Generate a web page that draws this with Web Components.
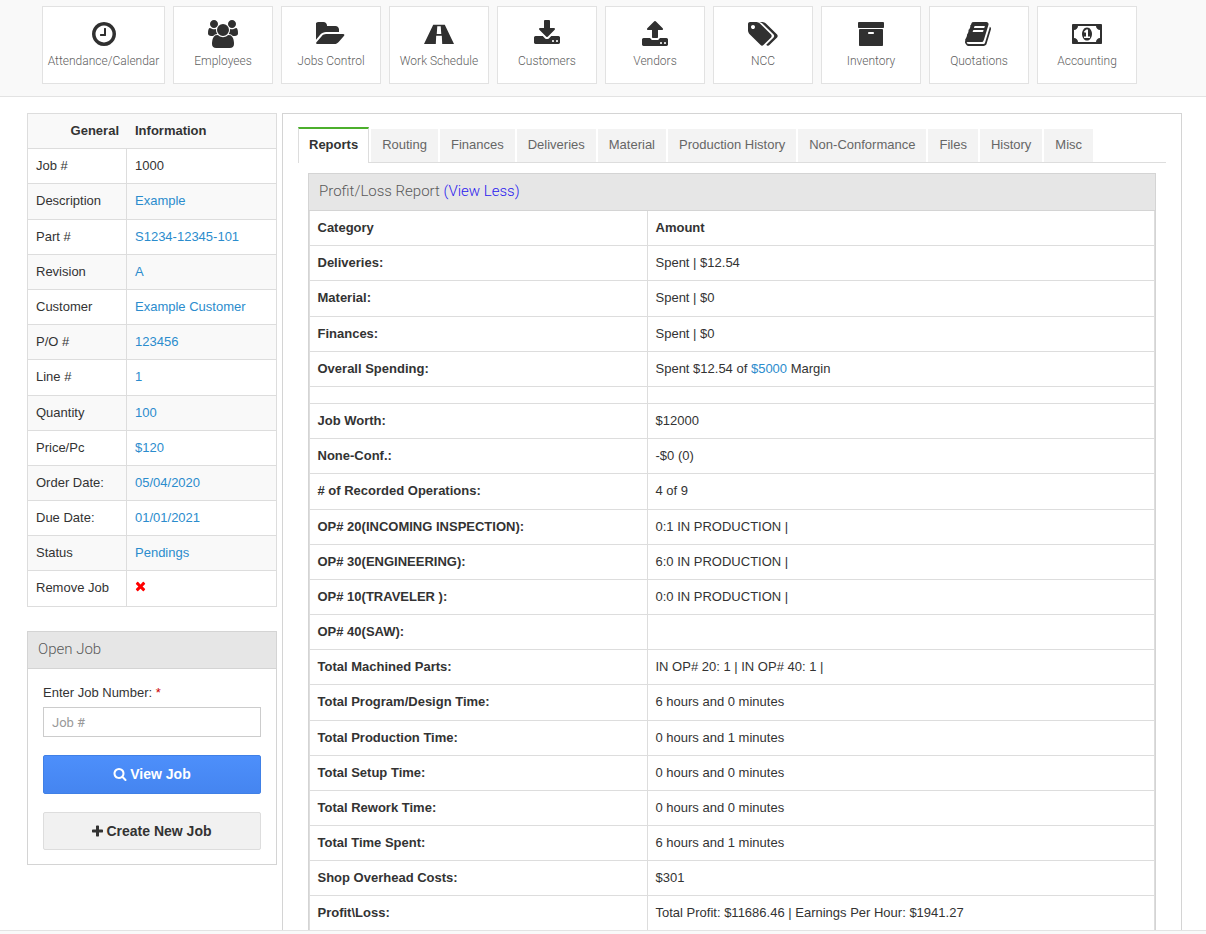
<!DOCTYPE html>
<html lang="en">
<head>
<meta charset="utf-8">
<title>Job</title>
<style>
  html, body { margin: 0; height: 100%; overflow: hidden; background: #fff; }
  body { font: 13px "Liberation Sans", Arial, sans-serif; color: #333; }
  .main { display: flex; align-items: flex-start; gap: 5px; padding: 16px 0 0 27px; }
  .left { display: flex; flex-direction: column; gap: 24.7px; width: 250px; flex: none; }
</style>
</head>
<body>
<top-bar>
  <nav-tile icon="clock" style="width: 123px">Attendance/Calendar</nav-tile>
  <nav-tile icon="users">Employees</nav-tile>
  <nav-tile icon="folder">Jobs Control</nav-tile>
  <nav-tile icon="road">Work Schedule</nav-tile>
  <nav-tile icon="download">Customers</nav-tile>
  <nav-tile icon="upload">Vendors</nav-tile>
  <nav-tile icon="tags">NCC</nav-tile>
  <nav-tile icon="archive">Inventory</nav-tile>
  <nav-tile icon="book">Quotations</nav-tile>
  <nav-tile icon="money">Accounting</nav-tile>
</top-bar>

<div class="main">
  <div class="left">
    <info-table>
      <info-row label="Job #" plain>1000</info-row>
      <info-row label="Description">Example</info-row>
      <info-row label="Part #">S1234-12345-101</info-row>
      <info-row label="Revision">A</info-row>
      <info-row label="Customer">Example Customer</info-row>
      <info-row label="P/O #">123456</info-row>
      <info-row label="Line #">1</info-row>
      <info-row label="Quantity">100</info-row>
      <info-row label="Price/Pc">$120</info-row>
      <info-row label="Order Date:">05/04/2020</info-row>
      <info-row label="Due Date:">01/01/2021</info-row>
      <info-row label="Status">Pendings</info-row>
      <info-row label="Remove Job" plain><fa-icon name="times" size="14" color="#f00" style="vertical-align: top"></fa-icon></info-row>
    </info-table>
    <open-job></open-job>
  </div>

  <report-view>
    <tab-item active>Reports</tab-item>
    <tab-item>Routing</tab-item>
    <tab-item>Finances</tab-item>
    <tab-item>Deliveries</tab-item>
    <tab-item>Material</tab-item>
    <tab-item>Production History</tab-item>
    <tab-item>Non-Conformance</tab-item>
    <tab-item>Files</tab-item>
    <tab-item>History</tab-item>
    <tab-item>Misc</tab-item>

    <report-row slot="rows" label="Category" head>Amount</report-row>
    <report-row slot="rows" label="Deliveries:">Spent | $12.54</report-row>
    <report-row slot="rows" label="Material:">Spent | $0</report-row>
    <report-row slot="rows" label="Finances:">Spent | $0</report-row>
    <report-row slot="rows" label="Overall Spending:">Spent $12.54 of <a-link>$5000</a-link> Margin</report-row>
    <report-row slot="rows" spacer></report-row>
    <report-row slot="rows" label="Job Worth:">$12000</report-row>
    <report-row slot="rows" label="None-Conf.:">-$0 (0)</report-row>
    <report-row slot="rows" label="# of Recorded Operations:">4 of 9</report-row>
    <report-row slot="rows" label="OP# 20(INCOMING INSPECTION):">0:1 IN PRODUCTION |</report-row>
    <report-row slot="rows" label="OP# 30(ENGINEERING):">6:0 IN PRODUCTION |</report-row>
    <report-row slot="rows" label="OP# 10(TRAVELER ):">0:0 IN PRODUCTION |</report-row>
    <report-row slot="rows" label="OP# 40(SAW):"></report-row>
    <report-row slot="rows" label="Total Machined Parts:">IN OP# 20: 1 | IN OP# 40: 1 |</report-row>
    <report-row slot="rows" label="Total Program/Design Time:">6 hours and 0 minutes</report-row>
    <report-row slot="rows" label="Total Production Time:">0 hours and 1 minutes</report-row>
    <report-row slot="rows" label="Total Setup Time:">0 hours and 0 minutes</report-row>
    <report-row slot="rows" label="Total Rework Time:">0 hours and 0 minutes</report-row>
    <report-row slot="rows" label="Total Time Spent:">6 hours and 1 minutes</report-row>
    <report-row slot="rows" label="Shop Overhead Costs:">$301</report-row>
    <report-row slot="rows" label="Profit\Loss:">Total Profit: $11686.46 | Earnings Per Hour: $1941.27</report-row>
  </report-view>
</div>

<page-footer></page-footer>

<script>
// Font Awesome 4 shapes, 64 units = 1px at 1em = 28px
const ICONS = {
  clock: [1792, "M1024 544v448q0 14-9 23t-23 9h-320q-14 0-23-9t-9-23v-64q0-14 9-23t23-9h224v-352q0-14 9-23t23-9h64q14 0 23 9t9 23zm416 352q0-148-73-273t-198-198-273-73-273 73-198 198-73 273 73 273 198 198 273 73 273-73 198-198 73-273zm224 0q0 209-103 385.500t-279.500 279.500-385.500 103-385.500-103-279.500-279.500-103-385.500 103-385.500 279.500-279.500 385.500-103 385.500 103 279.500 279.500 103 385.500z"],
  users: [1920, "M593 896q-162 5-265 128h-134q-82 0-138-40.500t-56-118.500q0-353 124-353 6 0 43.500 21t97.500 42.500 119 21.500q67 0 133-23-5 37-5 66 0 139 81 256zm1071 637q0 120-73 189.500t-194 69.500h-874q-121 0-194-69.500t-73-189.500q0-53 3.500-103.500t14-109 26.500-108.500 43-97.500 62-81 85.500-53.500 111.500-20q10 0 43 21.500t73 48 107 48 135 21.500 135-21.500 107-48 73-48 43-21.500q61 0 111.500 20t85.500 53.500 62 81 43 97.500 26.500 108.500 14 109 3.500 103.500zm-1024-1277q0 106-75 181t-181 75-181-75-75-181 75-181 181-75 181 75 75 181zm704 384q0 159-112.500 271.500t-271.500 112.500-271.500-112.500-112.500-271.500 112.500-271.500 271.500-112.500 271.500 112.500 112.500 271.500zm576 225q0 78-56 118.500t-138 40.500h-134q-103-123-265-128 81-117 81-256 0-29-5-66 66 23 133 23 59 0 119-21.500t97.500-42.500 43.500-21q124 0 124 353zm-128-609q0 106-75 181t-181 75-181-75-75-181 75-181 181-75 181 75 75 181z"],
  folder: [1920, "M1815 952q0 31-31 66l-336 396q-43 51-120.500 86.500t-143.500 35.500h-1088q-34 0-60.500-13t-26.500-43q0-31 31-66l336-396q43-51 120.500-86.500t143.500-35.500h1088q34 0 60.500 13t26.500 43zm-343-344v160h-832q-94 0-197 47.500t-164 119.500l-337 396-5 6q0-4-.5-12.500t-.5-12.500v-960q0-92 66-158t158-66h320q92 0 158 66t66 158v32h544q92 0 158 66t66 158z"],
  road: [1920, "M590 300H1330L1920 1536H1165L1140 1010H780L755 1536H0ZM850 400L815 890H1105L1070 400Z"],
  download: [1792, "M1344 1344q0-26-19-45t-45-19-45 19-19 45 19 45 45 19 45-19 19-45zm256 0q0-26-19-45t-45-19-45 19-19 45 19 45 45 19 45-19 19-45zm128-224v320q0 40-28 68t-68 28h-1472q-40 0-68-28t-28-68v-320q0-40 28-68t68-28h465l135 136q58 56 136 56t136-56l136-136h464q40 0 68 28t28 68zm-325-569q17 41-14 70l-448 448q-18 19-45 19t-45-19l-448-448q-31-29-14-70 17-39 59-39h256v-448q0-26 19-45t45-19h256q26 0 45 19t19 45v448h256q42 0 59 39z"],
  upload: [1792, "M1344 1472q0-26-19-45t-45-19-45 19-19 45 19 45 45 19 45-19 19-45zm256 0q0-26-19-45t-45-19-45 19-19 45 19 45 45 19 45-19 19-45zm128-224v320q0 40-28 68t-68 28h-1472q-40 0-68-28t-28-68v-320q0-40 28-68t68-28h427q21 56 70.500 92t110.500 36h256q61 0 110.500-36t70.500-92h427q40 0 68 28t28 68zm-325-648q-17 40-59 40h-256v448q0 26-19 45t-45 19h-256q-26 0-45-19t-19-45v-448h-256q-42 0-59-40-17-39 14-69l448-448q18-19 45-19t45 19l448 448q31 30 14 69z"],
  tags: [1920, "M448 448q0-53-37.500-90.500t-90.500-37.500-90.500 37.500-37.500 90.500 37.500 90.500 90.500 37.500 90.500-37.500 37.500-90.500zm1067 576q0 53-37 90l-491 492q-39 37-91 37-53 0-90-37l-715-716q-38-37-64.500-101t-26.500-117v-416q0-52 38-90t90-38h416q53 0 117 26.500t102 64.500l715 714q37 39 37 91zm384 0q0 53-37 90l-491 492q-39 37-91 37-36 0-59-14t-53-45l470-470q37-37 37-90 0-52-37-91l-715-714q-38-38-102-64.500t-117-26.500h224q53 0 117 26.500t102 64.500l715 714q37 39 37 91z"],
  archive: [1792, "M1088 832q0-26-19-45t-45-19h-256q-26 0-45 19t-19 45 19 45 45 19h256q26 0 45-19t19-45zm576-192v960q0 26-19 45t-45 19h-1408q-26 0-45-19t-19-45v-960q0-26 19-45t45-19h1408q26 0 45 19t19 45zm64-448v256q0 26-19 45t-45 19h-1536q-26 0-45-19t-19-45v-256q0-26 19-45t45-19h1536q26 0 45 19t19 45z"],
  book: [1792, "M1639 478q40 57 18 129l-275 906q-19 64-76.500 107.500t-122.500 43.500h-923q-77 0-148.500-53.500t-99.500-131.500q-24-67-2-127 0-4 3-27t4-37q1-8-3-21.500t-3-19.500q2-11 8-21t16.500-23.500 16.500-23.500q23-38 45-91.500t30-91.500q3-10 .5-30t-.5-28q3-11 17-28t17-23q21-36 42-92t25-90q1-9-2.500-32t.5-28q4-13 22-30.500t22-22.500q19-26 42.500-84.500t27.500-96.500q1-8-3-25.500t-2-26.500q2-8 9-18t18-23 17-21q8-12 16.500-30.500t15-35 16-36 19.500-32 26.500-23.500 36-11.500 47.500 5.500l-1 3q38-9 51-9h761q74 0 114 56t18 130l-274 906q-36 119-71.500 153.500t-128.500 34.500h-869q-27 0-38 15-11 16-1 43 24 70 144 70h923q29 0 56-15.500t35-41.500l300-987q7-22 5-57 38 15 59 43zm-1064 2q-4 13 2 22.500t20 9.500h608q13 0 25.500-9.500t16.500-22.500l21-64q4-13-2-22.500t-20-9.500h-608q-13 0-25.500 9.500t-16.500 22.500zm-83 256q-4 13 2 22.500t20 9.500h608q13 0 25.500-9.500t16.500-22.500l21-64q4-13-2-22.500t-20-9.500h-608q-13 0-25.500 9.500t-16.500 22.500z"],
  money: [1920, "M768 1152h384v-96h-128v-448h-114l-148 137 77 80q42-37 55-57h2v288h-128v96zm512-256q0 70-21 142t-59.500 134-101.500 101-138 39-138-39-101.500-101-59.500-134-21-142 21-142 59.500-134 101.500-101 138-39 138 39 101.500 101 59.500 134 21 142zm512 256v-512q-106 0-181-75t-75-181h-1152q0 106-75 181t-181 75v512q106 0 181 75t75 181h1152q0-106 75-181t181-75zm128-832v1152q0 26-19 45t-45 19h-1792q-26 0-45-19t-19-45v-1152q0-26 19-45t45-19h1792q26 0 45 19t19 45z"],
  search: [1792, "M1216 832q0-185-131.500-316.500t-316.500-131.500-316.500 131.500-131.500 316.500 131.500 316.500 316.500 131.500 316.500-131.500 131.500-316.500zm512 832q0 52-38 90t-90 38q-54 0-90-38l-343-342q-179 124-399 124-143 0-273.500-55.500t-225-150-150-225-55.500-273.500 55.500-273.500 150-225 225-150 273.500-55.500 273.500 55.500 225 150 150 225 55.500 273.500q0 220-124 399l343 343q37 37 37 90z"],
  plus: [1408, "M1408 800v192q0 40-28 68t-68 28h-416v416q0 40-28 68t-68 28h-192q-40 0-68-28t-28-68v-416h-416q-40 0-68-28t-28-68v-192q0-40 28-68t68-28h416v-416q0-40 28-68t68-28h192q40 0 68 28t28 68v416h416q40 0 68 28t28 68z"],
  times: [1408, "M1298 1322q0 40-28 68l-136 136q-28 28-68 28t-68-28l-294-294-294 294q-28 28-68 28t-68-28l-136-136q-28-28-28-68t28-68l294-294-294-294q-28-28-28-68t28-68l136-136q28-28 68-28t68 28l294 294 294-294q28-28 68-28t68 28l136 136q28 28 28 68t-28 68l-294 294 294 294q28 28 28 68z"]
};

class FaIcon extends HTMLElement {
  connectedCallback() {
    const [w, d] = ICONS[this.getAttribute("name")];
    const size = +this.getAttribute("size") || 28;
    const color = this.getAttribute("color") || "currentColor";
    this.attachShadow({ mode: "open" }).innerHTML = `
      <style>:host { display: inline-block; line-height: 0; vertical-align: middle; }</style>
      <svg width="${size * w / 1792}" height="${size}" viewBox="0 0 ${w} 1792" fill="${color}"><path d="${d}"/></svg>`;
  }
}

class ALink extends HTMLElement {
  connectedCallback() {
    this.attachShadow({ mode: "open" }).innerHTML = `
      <style>:host { display: inline; color: #2b8ccd; cursor: pointer; }</style><slot></slot>`;
  }
}

class TopBar extends HTMLElement {
  connectedCallback() {
    this.attachShadow({ mode: "open" }).innerHTML = `
      <style>
        :host {
          display: flex; gap: 8px; box-sizing: border-box; height: 97px;
          padding: 6px 0 0 42px; background: #f9f9f9; border-bottom: 1px solid #e3e3e3;
        }
      </style><slot></slot>`;
  }
}

class NavTile extends HTMLElement {
  connectedCallback() {
    this.attachShadow({ mode: "open" }).innerHTML = `
      <style>
        :host {
          display: flex; flex-direction: column; align-items: center; box-sizing: border-box;
          flex: none; width: 100px; height: 78px; padding-top: 13px; background: #fff;
          border: 1px solid #e2e2e2; color: #5f5f5f; cursor: pointer;
          font: 300 12px/16px Roboto, sans-serif; white-space: nowrap;
        }
        .ico { color: #303030; height: 28px; margin-bottom: 5px; }
      </style>
      <div class="ico"><fa-icon name="${this.getAttribute("icon")}"></fa-icon></div>
      <slot></slot>`;
  }
}

class InfoTable extends HTMLElement {
  connectedCallback() {
    this.attachShadow({ mode: "open" }).innerHTML = `
      <style>
        :host { display: block; border: 1px solid #ddd; border-bottom: 0; }
        .head {
          display: grid; grid-template-columns: 99px 1fr; height: 34.3px; line-height: 34px;
          background: #f9f9f9; border-bottom: 1px solid #ddd; font-weight: bold;
        }
        .head span:first-child { text-align: right; padding-right: 8px; }
        .head span:last-child { padding-left: 8px; }
        ::slotted(info-row:nth-child(even)) { background: #f9f9f9; }
      </style>
      <div class="head"><span>General</span><span>Information</span></div>
      <slot></slot>`;
  }
}

class InfoRow extends HTMLElement {
  connectedCallback() {
    const plain = this.hasAttribute("plain");
    this.attachShadow({ mode: "open" }).innerHTML = `
      <style>
        :host { display: grid; grid-template-columns: 99px 1fr; border-bottom: 1px solid #ddd; line-height: 18.17px; }
        .k, .v { padding: 8px; }
        .k { border-right: 1px solid #ddd; color: #333; }
        .v { color: ${plain ? "#333" : "#2b8ccd"}; }
      </style>
      <div class="k">${this.getAttribute("label")}</div>
      <div class="v"><slot></slot></div>`;
  }
}

class OpenJob extends HTMLElement {
  connectedCallback() {
    this.attachShadow({ mode: "open" }).innerHTML = `
      <style>
        :host { display: block; border: 1px solid #d4d4d4; }
        .title {
          height: 36px; padding-left: 10px; background: #e6e6e6;
          border-bottom: 1px solid #d4d4d4; color: #5a5a5a; font: 300 15px/35px Roboto, sans-serif;
        }
        .body { padding: 15px 15px 14px; display: flex; flex-direction: column; }
        label { line-height: 18px; margin-bottom: 5px; }
        label b { color: #c00; font-weight: normal; }
        input {
          box-sizing: border-box; width: 100%; height: 30px; margin: 0 0 18px; padding: 0 8px;
          border: 1px solid #ccc; font: 13px Roboto, sans-serif; color: #333; outline: 0; border-radius: 0;
        }
        input::placeholder { color: #999; opacity: 1; }
        .btn {
          display: flex; align-items: center; justify-content: center; gap: 3px; box-sizing: border-box;
          border-radius: 2px; font: bold 14px "Liberation Sans", Arial, sans-serif; cursor: pointer;
        }
        .blue {
          height: 39px; padding-bottom: 2px; margin-bottom: 18px; color: #fff; border: 1px solid #4080e6;
          background: linear-gradient(#4d8ffb, #4585f0);
        }
        .gray { height: 38px; color: #333; background: #f1f1f1; border: 1px solid #ddd; }
      </style>
      <div class="title">Open Job</div>
      <div class="body">
        <label>Enter Job Number: <b>*</b></label>
        <input placeholder="Job #">
        <div class="btn blue"><fa-icon name="search" size="14"></fa-icon>View Job</div>
        <div class="btn gray"><fa-icon name="plus" size="14"></fa-icon>Create New Job</div>
      </div>`;
  }
}

class TabItem extends HTMLElement {
  connectedCallback() {
    this.attachShadow({ mode: "open" }).innerHTML = `
      <style>
        :host {
          display: block; box-sizing: border-box; height: 33px; margin-top: 2px; padding: 0 11px;
          line-height: 31px; background: #f3f3f3; color: #666; cursor: pointer;
        }
        :host([active]) {
          height: 36px; margin: 0 0 -1px; padding: 0 10px; line-height: 32px; background: #fff;
          border: 1px solid #ddd; border-top: 2px solid #4caf2c; border-bottom: 0;
          color: #333; font-weight: bold;
        }
      </style><slot></slot>`;
  }
}

class ReportView extends HTMLElement {
  connectedCallback() {
    this.attachShadow({ mode: "open" }).innerHTML = `
      <style>
        :host {
          display: block; box-sizing: border-box; width: 900px; height: 821px; overflow: hidden;
          padding: 13px 15px 0; border: 1px solid #d4d4d4; background: #fff;
        }
        .tabs { display: flex; gap: 2px; border-bottom: 1px solid #ddd; }
        .panel { margin: 10px 10px 0; border: 1px solid #d4d4d4; }
        .title {
          height: 36px; padding-left: 10px; background: #e6e6e6; border-bottom: 1px solid #d4d4d4;
          color: #5a5a5a; font: 300 15px/35px Roboto, sans-serif;
        }
        .title span { color: #2a1aee; }
        .rows { border: 1px solid #ddd; border-top: 0; }
      </style>
      <div class="tabs"><slot></slot></div>
      <div class="panel">
        <div class="title">Profit/Loss Report <span>(View Less)</span></div>
        <div class="rows"><slot name="rows"></slot></div>
      </div>`;
  }
}

class ReportRow extends HTMLElement {
  connectedCallback() {
    const spacer = this.hasAttribute("spacer");
    this.attachShadow({ mode: "open" }).innerHTML = `
      <style>
        :host {
          display: grid; grid-template-columns: 338px 1fr; border-bottom: 1px solid #ddd;
          line-height: 18.17px; ${spacer ? "height: 16.2px;" : ""}
        }
        :host([head]) .v { font-weight: bold; }
        .k, .v { padding: ${spacer ? "0" : "8px 8px 8px 7.5px"}; }
        .k { border-right: 1px solid #ddd; font-weight: bold; }
      </style>
      <div class="k">${this.getAttribute("label") || ""}</div>
      <div class="v"><slot></slot></div>`;
  }
}

class PageFooter extends HTMLElement {
  connectedCallback() {
    this.attachShadow({ mode: "open" }).innerHTML = `
      <style>
        :host {
          position: fixed; left: 0; right: 0; bottom: 0; height: 3px;
          background: #f9f9f9; border-top: 1px solid #e3e3e3;
        }
      </style>`;
  }
}

// children first so the icons exist when the tiles render them
customElements.define("fa-icon", FaIcon);
customElements.define("a-link", ALink);
customElements.define("top-bar", TopBar);
customElements.define("nav-tile", NavTile);
customElements.define("info-table", InfoTable);
customElements.define("info-row", InfoRow);
customElements.define("open-job", OpenJob);
customElements.define("tab-item", TabItem);
customElements.define("report-view", ReportView);
customElements.define("report-row", ReportRow);
customElements.define("page-footer", PageFooter);
</script>
</body>
</html>
